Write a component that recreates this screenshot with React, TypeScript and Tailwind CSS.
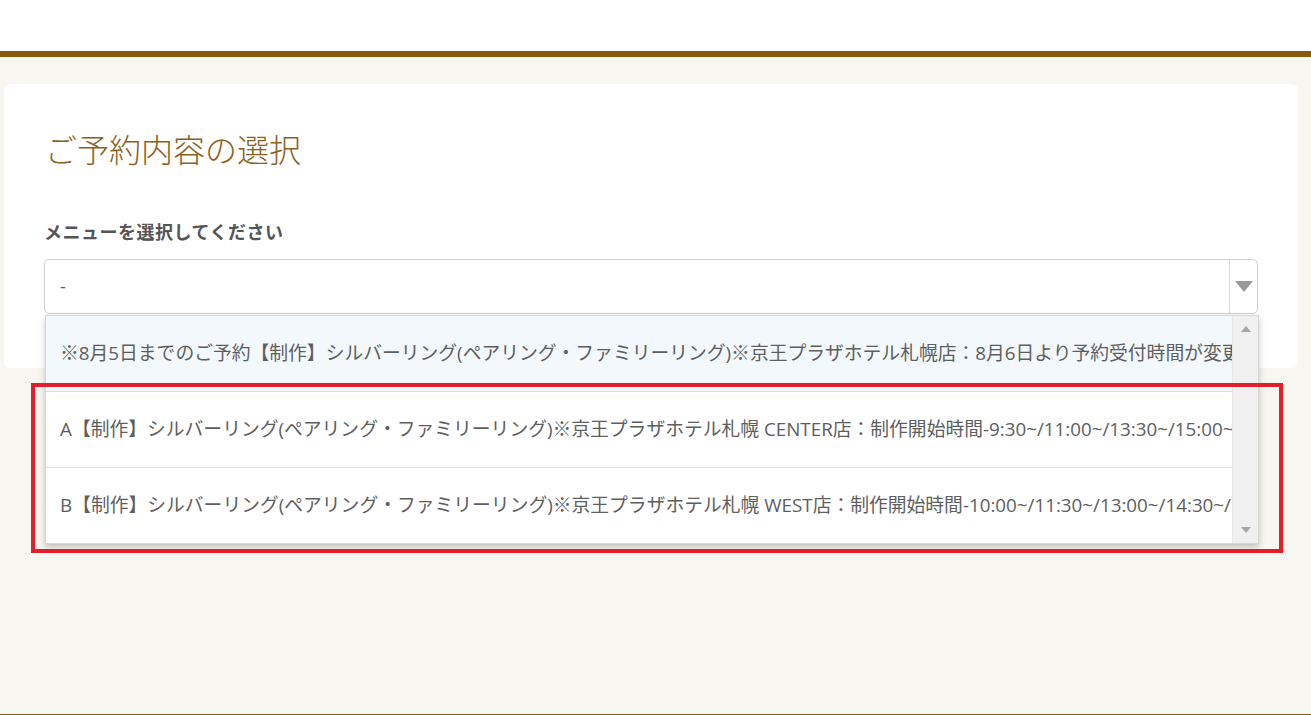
import React from "react";

const options = [
  "※8月5日までのご予約【制作】シルバーリング(ペアリング・ファミリーリング)※京王プラザホテル札幌店：8月6日より予約受付時間が変更になりました",
  "A【制作】シルバーリング(ペアリング・ファミリーリング)※京王プラザホテル札幌 CENTER店：制作開始時間-9:30~/11:00~/13:30~/15:00~/16:30~",
  "B【制作】シルバーリング(ペアリング・ファミリーリング)※京王プラザホテル札幌 WEST店：制作開始時間-10:00~/11:30~/13:00~/14:30~/16:00~",
];

const App = () => {
  return (
    <div className="min-h-[715px] bg-[#f7f6f1] flex flex-col font-['Open_Sans','Noto_Sans_CJK_JP',sans-serif] text-[#5e5e5e]">
      <header className="h-[57px] bg-white border-b-[6px] border-[#8a5a0b]" />

      <main className="flex-1 pt-[27px] pl-[4px] pr-[13px]">
        <div className="bg-white rounded-md px-[40px] pt-[46px] pb-[54px]">
          <h2 className="text-[32px] leading-[40px] font-light text-[#8d6022] pl-[1px]">ご予約内容の選択</h2>

          <p className="mt-[50px] text-[18px] leading-[24px] font-bold text-[#555] tracking-[0.5px]">
            メニューを選択してください
          </p>

          <div className="relative mt-[15px]">
            <div className="flex h-[55px] bg-white border border-[#cfcfcf] rounded-[5px]">
              <div className="flex-1 flex items-center pl-[15px] text-[18px]">-</div>
              <div className="w-[28px] border-l border-[#dcdcdc] flex items-center justify-center">
                <svg width="18" height="11" viewBox="0 0 18 11">
                  <path d="M0 0h18L9 11z" fill="#9a9a9a" />
                </svg>
              </div>
            </div>

            <div className="absolute left-[1px] right-[-1px] top-[56px] z-10 flex bg-white border border-[#d6d6d6] shadow-[0_3px_6px_rgba(0,0,0,0.22)]">
              <ul className="flex-1 min-w-0">
                {options.map((o, i) => (
                  <li
                    key={i}
                    className={
                      i === 0
                        ? "h-[75px] flex items-center pl-[14px] bg-[#f3f8fc] whitespace-nowrap overflow-hidden text-[18.8px]"
                        : "h-[76px] flex items-center pl-[14px] border-t border-[#dddddd] whitespace-nowrap overflow-hidden text-[18.8px]"
                    }
                  >
                    {o}
                  </li>
                ))}
              </ul>
              <div className="w-[26px] bg-[#f0f0f0] border-l border-[#e6e6e6] flex flex-col items-center justify-between py-[10px]">
                <svg width="10" height="6" viewBox="0 0 10 6">
                  <path d="M0 6h10L5 0z" fill="#a6a6a6" />
                </svg>
                <svg width="10" height="6" viewBox="0 0 10 6">
                  <path d="M0 0h10L5 6z" fill="#a6a6a6" />
                </svg>
              </div>
            </div>

            <div className="absolute left-[-13px] top-[124px] w-[1252px] h-[170px] border-4 border-[#e31e2a] z-20 pointer-events-none" />
          </div>
        </div>
      </main>

      <footer className="h-px bg-[#8a5a0b]" />
    </div>
  );
};

export default App;
